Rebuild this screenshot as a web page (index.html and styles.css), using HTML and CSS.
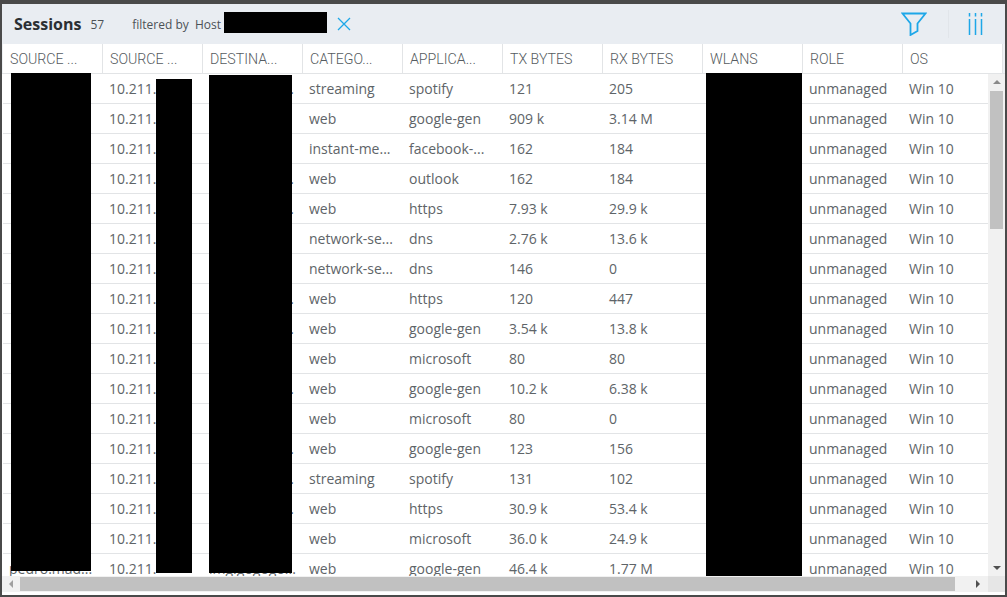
FILE: index.html
```html
<!DOCTYPE html>
<html lang="en">
<head>
<meta charset="utf-8">
<title>Sessions</title>
<link rel="stylesheet" href="styles.css">
</head>
<body>
<div class="window">
  <header class="toolbar">
    <div class="title">Sessions</div>
    <div class="count">57</div>
    <div class="filter">filtered by&nbsp; Host</div>
    <div class="mask mask-host"></div>
    <svg class="close" width="14" height="14" viewBox="0 0 14 14"><path d="M1 1l12 12M13 1L1 13" fill="none" stroke="#1ea7e8" stroke-width="1.3"/></svg>
    <svg class="funnel" width="26" height="24" viewBox="0 0 26 24"><path d="M1.500 1.500h23L16.500 11.500v7.500L9.500 23V11.500z" fill="none" stroke="#1ea7e8" stroke-width="1.800" stroke-linejoin="miter"/></svg>
    <div class="divider"></div>
    <svg class="cols" width="15" height="22" viewBox="0 0 15 22"><path d="M1.500 6v16M7.500 6v16M13.500 6v16M1.500 0v3.500M7.500 0v3.500M13.500 0v3.500" fill="none" stroke="#1ea7e8" stroke-width="1.500"/></svg>
  </header>
  <div class="thead">
    <div class="th">SOURCE ...</div><div class="th">SOURCE ...</div><div class="th">DESTINA...</div><div class="th">CATEGO...</div><div class="th">APPLICA...</div><div class="th">TX BYTES</div><div class="th">RX BYTES</div><div class="th">WLANS</div><div class="th">ROLE</div><div class="th">OS</div>
  </div>
  <div class="body">
    <div class="rows">
      <div class="tr"><div class="td"></div><div class="td">10.211.</div><div class="td dest">.</div><div class="td">streaming</div><div class="td">spotify</div><div class="td">121</div><div class="td">205</div><div class="td"></div><div class="td">unmanaged</div><div class="td">Win 10</div></div>
      <div class="tr"><div class="td"></div><div class="td">10.211.</div><div class="td dest"></div><div class="td">web</div><div class="td">google-gen</div><div class="td">909 k</div><div class="td">3.14 M</div><div class="td"></div><div class="td">unmanaged</div><div class="td">Win 10</div></div>
      <div class="tr"><div class="td"></div><div class="td">10.211.</div><div class="td dest"></div><div class="td">instant-me...</div><div class="td">facebook-...</div><div class="td">162</div><div class="td">184</div><div class="td"></div><div class="td">unmanaged</div><div class="td">Win 10</div></div>
      <div class="tr"><div class="td"></div><div class="td">10.211.</div><div class="td dest">.</div><div class="td">web</div><div class="td">outlook</div><div class="td">162</div><div class="td">184</div><div class="td"></div><div class="td">unmanaged</div><div class="td">Win 10</div></div>
      <div class="tr"><div class="td"></div><div class="td">10.211.</div><div class="td dest">.</div><div class="td">web</div><div class="td">https</div><div class="td">7.93 k</div><div class="td">29.9 k</div><div class="td"></div><div class="td">unmanaged</div><div class="td">Win 10</div></div>
      <div class="tr"><div class="td"></div><div class="td">10.211.</div><div class="td dest"></div><div class="td">network-se...</div><div class="td">dns</div><div class="td">2.76 k</div><div class="td">13.6 k</div><div class="td"></div><div class="td">unmanaged</div><div class="td">Win 10</div></div>
      <div class="tr"><div class="td"></div><div class="td">10.211.</div><div class="td dest"></div><div class="td">network-se...</div><div class="td">dns</div><div class="td">146</div><div class="td">0</div><div class="td"></div><div class="td">unmanaged</div><div class="td">Win 10</div></div>
      <div class="tr"><div class="td"></div><div class="td">10.211.</div><div class="td dest">.</div><div class="td">web</div><div class="td">https</div><div class="td">120</div><div class="td">447</div><div class="td"></div><div class="td">unmanaged</div><div class="td">Win 10</div></div>
      <div class="tr"><div class="td"></div><div class="td">10.211.</div><div class="td dest">.</div><div class="td">web</div><div class="td">google-gen</div><div class="td">3.54 k</div><div class="td">13.8 k</div><div class="td"></div><div class="td">unmanaged</div><div class="td">Win 10</div></div>
      <div class="tr"><div class="td"></div><div class="td">10.211.</div><div class="td dest"></div><div class="td">web</div><div class="td">microsoft</div><div class="td">80</div><div class="td">80</div><div class="td"></div><div class="td">unmanaged</div><div class="td">Win 10</div></div>
      <div class="tr"><div class="td"></div><div class="td">10.211.</div><div class="td dest">.</div><div class="td">web</div><div class="td">google-gen</div><div class="td">10.2 k</div><div class="td">6.38 k</div><div class="td"></div><div class="td">unmanaged</div><div class="td">Win 10</div></div>
      <div class="tr"><div class="td"></div><div class="td">10.211.</div><div class="td dest"></div><div class="td">web</div><div class="td">microsoft</div><div class="td">80</div><div class="td">0</div><div class="td"></div><div class="td">unmanaged</div><div class="td">Win 10</div></div>
      <div class="tr"><div class="td"></div><div class="td">10.211.</div><div class="td dest">.</div><div class="td">web</div><div class="td">google-gen</div><div class="td">123</div><div class="td">156</div><div class="td"></div><div class="td">unmanaged</div><div class="td">Win 10</div></div>
      <div class="tr"><div class="td"></div><div class="td">10.211.</div><div class="td dest">.</div><div class="td">streaming</div><div class="td">spotify</div><div class="td">131</div><div class="td">102</div><div class="td"></div><div class="td">unmanaged</div><div class="td">Win 10</div></div>
      <div class="tr"><div class="td"></div><div class="td">10.211.</div><div class="td dest">.</div><div class="td">web</div><div class="td">https</div><div class="td">30.9 k</div><div class="td">53.4 k</div><div class="td"></div><div class="td">unmanaged</div><div class="td">Win 10</div></div>
      <div class="tr"><div class="td"></div><div class="td">10.211.</div><div class="td dest"></div><div class="td">web</div><div class="td">microsoft</div><div class="td">36.0 k</div><div class="td">24.9 k</div><div class="td"></div><div class="td">unmanaged</div><div class="td">Win 10</div></div>
      <div class="tr"><div class="td">pedro.mad...</div><div class="td">10.211.</div><div class="td dest">img.gogogo...</div><div class="td">web</div><div class="td">google-gen</div><div class="td">46.4 k</div><div class="td">1.77 M</div><div class="td"></div><div class="td">unmanaged</div><div class="td">Win 10</div></div>
    </div>
    <div class="vscroll">
      <div class="arrow up"></div>
      <div class="vtrack"><div class="vthumb"></div></div>
      <div class="arrow down"></div>
    </div>
    <div class="mask mask-a"></div>
    <div class="mask mask-b"></div>
    <div class="mask mask-c"></div>
    <div class="mask mask-d"></div>
  </div>
  <div class="hscroll">
    <div class="harrow left"></div>
    <div class="hthumb"></div>
    <div class="harrow right"></div>
    <div class="corner"></div>
  </div>
</div>
</body>
</html>
```
FILE: styles.css
```css
html, body { margin: 0; padding: 0; height: 100%; overflow: hidden; background: #4a4a4a; }
.window {
  box-sizing: border-box; width: 1007px; height: 597px;
  border-style: solid; border-color: #4a4a4a; border-width: 4px 2px 2px 2px;
  background: #fff; display: flex; flex-direction: column;
  font-family: "Open Sans", sans-serif; color: #5e6468;
}
.toolbar {
  height: 40px; flex: none; background: #e9edf2; display: flex; align-items: center;
  position: relative; padding-left: 12px; box-sizing: border-box;
}
.title { font-size: 16px; font-weight: 700; color: #2b2f33; }
.count { font-size: 12px; margin-left: 9px; color: #4c5257; }
.filter { font-size: 12px; margin-left: 28px; color: #4c5257; }
.close { margin-left: 116px; }
.funnel { margin-left: auto; }
.divider { width: 1px; height: 28px; background: #e1e5ea; margin-left: 21px; }
.cols { margin-left: 19px; margin-right: 22px; }
.mask { position: absolute; background: #000; }
.mask-host { left: 222px; top: 8px; width: 103px; height: 21px; }
.thead { flex: none; height: 30px; display: flex; background: #eef1f4; border-bottom: 1px solid #e2e4e6; box-sizing: border-box; padding-left: 1px; }
.th {
  width: 100px; flex: none; box-sizing: border-box; border-right: 1px solid #e2e4e6;
  font-family: Roboto, sans-serif; font-weight: 300; font-size: 14.200px; line-height: 30px;
  padding-left: 7px; color: #555b60; white-space: nowrap; overflow: hidden; background: #fff;
}
.body { flex: 1; min-height: 0; display: flex; position: relative; }
.rows { flex: 1; min-width: 0; overflow: hidden; padding-left: 1px; }
.tr { display: flex; height: 30px; border-bottom: 1px solid #e2e4e6; box-sizing: border-box; }
.td {
  width: 100px; flex: none; box-sizing: border-box; padding-left: 6px;
  font-size: 14px; line-height: 30px; white-space: nowrap; overflow: hidden; color: #5e6468;
}
.td.dest { text-align: right; padding-right: 9px; }
.vscroll { width: 17px; flex: none; background: #f1f1f1; display: flex; flex-direction: column; }
.vtrack { flex: 1; }
.vthumb { width: 13px; height: 138px; margin: 1px 2px; background: #c1c1c1; }
.arrow { flex: none; display: flex; align-items: center; justify-content: center; }
.arrow.up { height: 16px; }
.arrow.down { height: 17px; }
.arrow.up::before { content: ""; border: 4px solid transparent; border-top: 0; border-bottom: 4px solid #8a8a8a; }
.arrow.down::before { content: ""; border: 4px solid transparent; border-bottom: 0; border-top: 4px solid #505050; }
.mask-a { left: 9px; top: -1px; width: 80px; height: 498px; }
.mask-b { left: 154px; top: 5px; width: 36px; height: 494px; }
.mask-c { left: 207px; top: 1px; width: 83px; height: 498px; }
.mask-d { left: 704px; top: -1px; width: 96px; height: 503px; }
.hscroll { flex: none; height: 16px; margin-bottom: 3px; background: #f1f1f1; display: flex; align-items: center; }
.harrow { height: 16px; flex: none; display: flex; align-items: center; justify-content: center; }
.harrow.left { width: 18px; }
.harrow.right { width: 17px; margin-left: 14px; }
.harrow.left::before { content: ""; border: 4px solid transparent; border-left: 0; border-right: 4px solid #a0a0a0; }
.harrow.right::before { content: ""; border: 4px solid transparent; border-right: 0; border-left: 4px solid #505050; }
.hthumb { width: 935px; height: 14px; background: #c1c1c1; }
.corner { width: 17px; height: 16px; margin-left: auto; background: #e6e6e6; }
```
